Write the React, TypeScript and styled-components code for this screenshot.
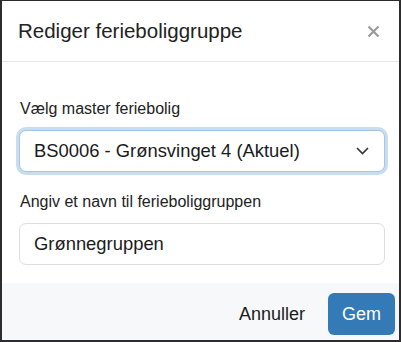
import React, { useState } from "react";
import styled, { createGlobalStyle } from "styled-components";

const GlobalStyle = createGlobalStyle`
  html, body {
    margin: 0;
    padding: 0;
    background: #ffffff;
  }
  * {
    box-sizing: border-box;
  }
`;

const Frame = styled.div`
  width: 401px;
  height: 342px;
  border: 2px solid #2d2d2d;
  border-top-width: 1px;
  background: #ffffff;
  display: flex;
  flex-direction: column;
  font-family: "Liberation Sans", Arial, sans-serif;
  color: #222222;
  overflow: hidden;
`;

const Header = styled.div`
  height: 61px;
  flex-shrink: 0;
  display: flex;
  align-items: center;
  justify-content: space-between;
  padding: 0 16px 0 16px;
  border-bottom: 1px solid #e5e5e5;
`;

const Title = styled.h4`
  margin: 0;
  font-size: 20.5px;
  font-weight: 400;
  color: #222222;
`;

const CloseButton = styled.button`
  border: 0;
  background: none;
  padding: 0;
  width: 20px;
  height: 20px;
  display: flex;
  align-items: center;
  justify-content: center;
  cursor: pointer;
`;

const Body = styled.div`
  flex: 1;
  display: flex;
  flex-direction: column;
  gap: 20px;
  padding: 37px 14px 18px 17px;
`;

const Field = styled.div`
  display: flex;
  flex-direction: column;
  gap: 11px;
`;

const Label = styled.label`
  font-size: 16px;
  line-height: 20px;
  color: #222222;
  padding-left: 1px;
`;

const SelectBox = styled.div<{ $focused?: boolean }>`
  height: 42px;
  display: flex;
  align-items: center;
  justify-content: space-between;
  padding: 0 15px 0 14px;
  border: 1px solid ${(p) => (p.$focused ? "#a3c5e6" : "#dcdcdc")};
  border-radius: 7px;
  box-shadow: ${(p) => (p.$focused ? "0 0 0 3px #c9dcf0" : "none")};
  font-size: 18.4px;
  color: #1a1a1a;
  background: #ffffff;
`;

const TextInput = styled.input`
  height: 42px;
  width: 100%;
  padding: 0 14px;
  border: 1px solid #dedede;
  border-radius: 7px;
  font-family: inherit;
  font-size: 18.4px;
  color: #1a1a1a;
  background: #ffffff;
  outline: none;
`;

const Footer = styled.div`
  flex-shrink: 0;
  height: 57px;
  background: #f7f8fa;
  display: flex;
  justify-content: flex-end;
  align-items: flex-start;
  gap: 9px;
  padding: 10px 4px 0 0;
`;

const Button = styled.button<{ $primary?: boolean }>`
  height: 42px;
  padding: 0 14px;
  border: 0;
  border-radius: 6px;
  font-family: inherit;
  font-size: 18px;
  background: ${(p) => (p.$primary ? "#337ab7" : "transparent")};
  color: ${(p) => (p.$primary ? "#ffffff" : "#1a1a1a")};
  cursor: pointer;
`;

const Close = () => (
  <svg width="13" height="13" viewBox="0 0 13 13">
    <path d="M1.5 1.5 L11.5 11.5 M11.5 1.5 L1.5 11.5" stroke="#9a9a9a" strokeWidth="2.2" strokeLinecap="butt" />
  </svg>
);

const Chevron = () => (
  <svg width="13" height="8" viewBox="0 0 13 8">
    <path d="M1 1 L6.5 6.5 L12 1" fill="none" stroke="#333" strokeWidth="1.6" />
  </svg>
);

export default function App() {
  const [name, setName] = useState("Grønnegruppen");

  return (
    <>
      <GlobalStyle />
      <Frame>
        <Header>
          <Title>Rediger ferieboliggruppe</Title>
          <CloseButton aria-label="Luk">
            <Close />
          </CloseButton>
        </Header>
        <Body>
          <Field>
            <Label>Vælg master feriebolig</Label>
            <SelectBox $focused>
              <span>BS0006 - Grønsvinget 4 (Aktuel)</span>
              <Chevron />
            </SelectBox>
          </Field>
          <Field>
            <Label>Angiv et navn til ferieboliggruppen</Label>
            <TextInput value={name} onChange={(e) => setName(e.target.value)} />
          </Field>
        </Body>
        <Footer>
          <Button>Annuller</Button>
          <Button $primary>Gem</Button>
        </Footer>
      </Frame>
    </>
  );
}
